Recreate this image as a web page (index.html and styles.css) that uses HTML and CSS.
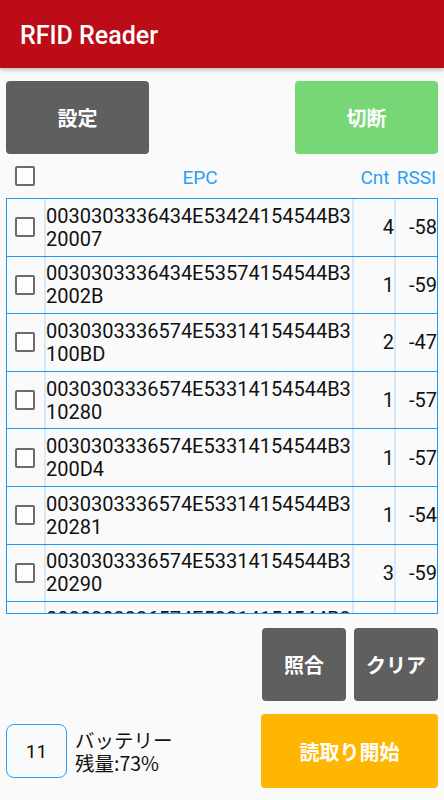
FILE: index.html
```html
<!DOCTYPE html>
<html lang="ja">
<head>
  <meta charset="UTF-8" />
  <meta name="viewport" content="width=device-width, initial-scale=1.0" />
  <title>RFID Reader</title>
  <link rel="stylesheet" href="styles.css">
</head>
<body>

<header class="app-bar">RFID Reader</header>

<main class="content">
  <div class="top-actions">
    <button type="button" class="btn btn-gray btn-wide">設定</button>
    <button type="button" class="btn btn-green btn-wide">切断</button>
  </div>

  <!-- column titles -->
  <div class="list-head">
    <div class="cell cell-check"><span class="check"></span></div>
    <div class="cell head-label">EPC</div>
    <div class="cell head-label">Cnt</div>
    <div class="cell head-label">RSSI</div>
  </div>

  <div class="tag-list" id="tagList">
    <!-- rows will be generated here -->
  </div>

  <div class="bottom-actions">
    <button type="button" class="btn btn-gray btn-small">照合</button>
    <button type="button" class="btn btn-gray btn-small">クリア</button>
  </div>

  <div class="footer-row">
    <div class="battery">
      <div class="battery-box">11</div>
      <div class="battery-text">
        <div>バッテリー</div>
        <div>残量:73%</div>
      </div>
    </div>
    <button type="button" class="btn btn-yellow btn-start">読取り開始</button>
  </div>
</main>

<script>
  // tags read so far
  const tags = [
    { epc: "0030303336434E53424154544B320007", cnt: 4, rssi: -58 },
    { epc: "0030303336434E53574154544B32002B", cnt: 1, rssi: -59 },
    { epc: "0030303336574E53314154544B3100BD", cnt: 2, rssi: -47 },
    { epc: "0030303336574E53314154544B310280", cnt: 1, rssi: -57 },
    { epc: "0030303336574E53314154544B3200D4", cnt: 1, rssi: -57 },
    { epc: "0030303336574E53314154544B320281", cnt: 1, rssi: -54 },
    { epc: "0030303336574E53314154544B320290", cnt: 3, rssi: -59 },
    { epc: "0030303336574E53314154544B320291", cnt: 1, rssi: -60 }
  ];

  const list = document.getElementById("tagList");

  tags.forEach((tag) => {
    const row = document.createElement("div");
    row.className = "tag-row";
    row.innerHTML =
      '<div class="cell cell-check"><span class="check"></span></div>' +
      '<div class="cell cell-epc">' + tag.epc.slice(0, 27) + '<br>' + tag.epc.slice(27) + '</div>' +
      '<div class="cell cell-cnt">' + tag.cnt + '</div>' +
      '<div class="cell cell-rssi">' + tag.rssi + '</div>';
    list.appendChild(row);
  });
</script>

</body>
</html>
```

FILE: styles.css
```css
body {
  font-family: Roboto, "Noto Sans CJK JP", sans-serif;
  background: #fafafa;
  margin: 0;
  color: #111;
}

.app-bar {
  height: 68px;
  box-sizing: border-box;
  background: #bb0c17;
  color: #fff;
  font-size: 25px;
  font-weight: 500;
  line-height: 64px;
  padding: 4px 0 0 20px;
  box-shadow: 0 2px 4px rgba(0,0,0,0.25);
  position: relative;
}

.content {
  padding: 0 6px;
}

.btn {
  border: none;
  border-radius: 4px;
  color: #fff;
  font-family: "Noto Sans CJK JP", sans-serif;
  font-weight: bold;
  font-size: 20px;
  cursor: pointer;
  padding: 0;
}

.btn-gray { background: #5f5f5f; }
.btn-green { background: #77d675; }
.btn-yellow { background: #ffb600; }

.top-actions {
  display: flex;
  justify-content: space-between;
  margin-top: 13px;
}

.btn-wide {
  width: 143px;
  height: 73px;
}

/* list */
.list-head,
.tag-row {
  display: grid;
  grid-template-columns: 39px 308px 42px 41px;
}

.list-head {
  height: 44px;
  align-items: center;
  padding: 0 1px;
}

.head-label {
  color: #2a9ff4;
  font-size: 19px;
  justify-content: center;
  padding-top: 2px;
}

.tag-list {
  height: 416px;
  border: 1px solid #1e9af3;
  box-sizing: border-box;
  overflow: hidden;
}

.tag-row {
  height: 57.6px;
  box-sizing: border-box;
  border-bottom: 1px solid #1e9af3;
}

.cell {
  display: flex;
  align-items: center;
  box-sizing: border-box;
}

.tag-row .cell {
  border-right: 2px solid #d6e9fb;
}

.tag-row .cell:last-child {
  border-right: none;
}

.cell-check {
  justify-content: center;
  padding-right: 2px;
}

.list-head .cell-check {
  padding-right: 3px;
}

.check {
  width: 16px;
  height: 16px;
  border: 2.5px solid #6b6b6b;
  border-radius: 2px;
  background: #fdfdfd;
}

.cell-epc {
  font-size: 20px;
  line-height: 23px;
  padding-top: 1px;
  white-space: nowrap;
  overflow: hidden;
}

.cell-cnt {
  font-size: 20px;
  justify-content: flex-end;
}

.cell-rssi {
  font-size: 20px;
  padding-left: 13px;
  overflow: hidden;
  white-space: nowrap;
}

/* bottom area */
.bottom-actions {
  display: flex;
  justify-content: flex-end;
  gap: 8px;
  margin-top: 14px;
}

.btn-small {
  width: 84px;
  height: 73px;
}

.footer-row {
  display: flex;
  justify-content: space-between;
  align-items: center;
  margin-top: 13px;
}

.battery {
  display: flex;
  align-items: center;
  gap: 8px;
}

.battery-box {
  width: 61px;
  height: 54px;
  box-sizing: border-box;
  border: 1px solid #2a9ff4;
  border-radius: 8px;
  display: flex;
  align-items: center;
  justify-content: center;
  font-size: 19px;
}

.battery-text {
  font-family: "Noto Sans CJK JP", sans-serif;
  font-size: 19.5px;
  line-height: 23px;
}

.btn-start {
  width: 177px;
  height: 74px;
}
```
